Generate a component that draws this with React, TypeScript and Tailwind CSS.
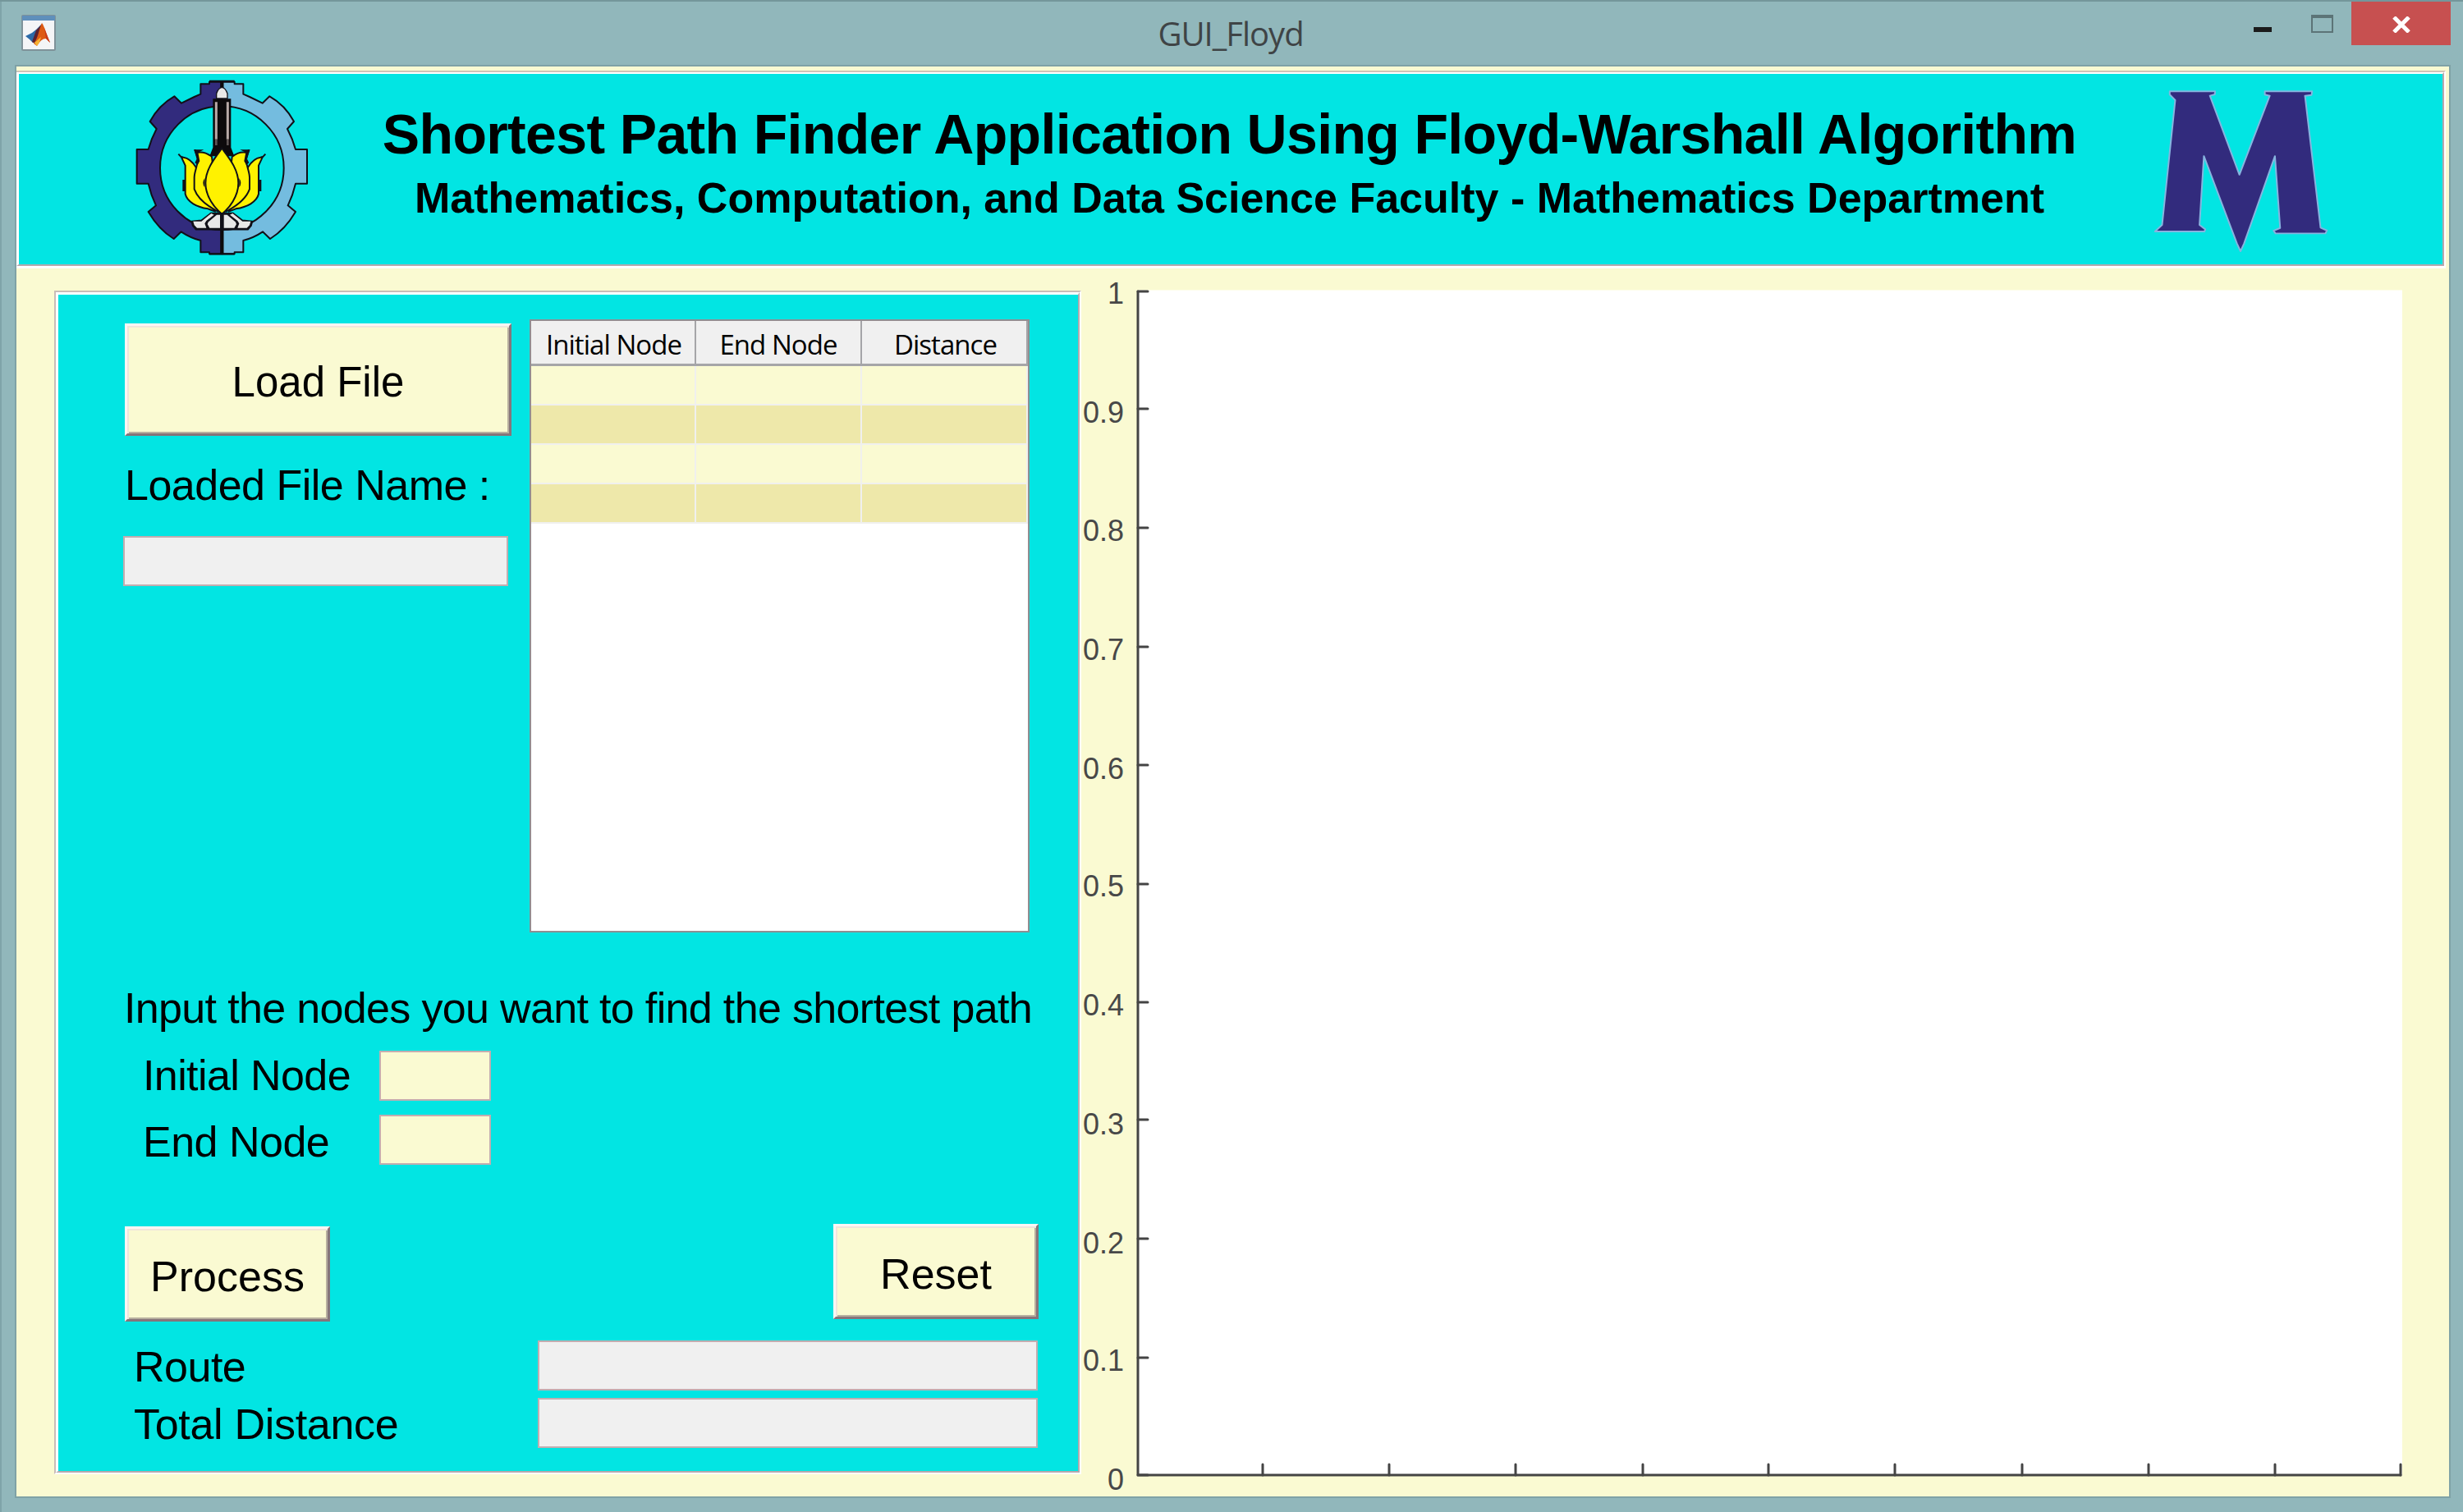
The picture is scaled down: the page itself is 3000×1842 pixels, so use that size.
import type { ReactNode } from "react";

const ARIAL = "font-['Liberation_Sans',Arial,sans-serif]";

const yTicks = [
  { label: "1", tick: 355, base: 370 },
  { label: "0.9", tick: 498, base: 515 },
  { label: "0.8", tick: 643, base: 659 },
  { label: "0.7", tick: 788, base: 804 },
  { label: "0.6", tick: 932, base: 949 },
  { label: "0.5", tick: 1077, base: 1092 },
  { label: "0.4", tick: 1221, base: 1237 },
  { label: "0.3", tick: 1364, base: 1382 },
  { label: "0.2", tick: 1509, base: 1527 },
  { label: "0.1", tick: 1654, base: 1670 },
  { label: "0", tick: 1797, base: 1815 },
];

const xTicks = [1538, 1692, 1846, 2001, 2154, 2308, 2463, 2617, 2771, 2924];

const halfGear =
  "M391 60H345V68H313V105L290 115L243 138L217 113Q160 145 128 205L152 232Q132 270 122 307H80V432H122Q132 475 150 512L122 535Q160 600 215 634L242 608Q275 630 313 640V683H345V689H391Z";

function GearLogo() {
  return (
    <svg className="h-[232px] w-[220px] shrink-0" viewBox="60 31 660 696">
      <g stroke="#111018" strokeWidth="6" strokeLinejoin="round">
        <path d={halfGear} fill="#322b7d" />
        <path d={halfGear} fill="#74bcdf" transform="translate(782 0) scale(-1 1)" />
        <circle cx="391" cy="375" r="226" fill="#02e5e3" />
      </g>
      <path d="M345 58H437M345 689H437" stroke="#111018" strokeWidth="7" />
      <path d="M391 60V90M391 540V689" stroke="#0d0a0c" strokeWidth="13" />
      {[false, true].map((mirror) => (
        <g
          key={String(mirror)}
          transform={mirror ? "translate(782 0) scale(-1 1)" : undefined}
          stroke="#111018"
          strokeLinejoin="round"
        >
          <path d="M391 540H350L316 566L280 570L284 586L296 600H391Z" fill="#111018" strokeWidth="5" />
          <path d="M352 541L316 570H286L290 584L300 594H334L328 578L334 568L362 546Z" fill="#e8e8e8" stroke="none" />
          <path d="M384 546H372L342 572L338 580L346 594H384Z" fill="#e8e8e8" stroke="none" />
          <path
            d="M232 324L243 336L257 366V470C264 500 300 518 340 524L366 534L310 440L296 372C282 350 266 338 250 336L243 334"
            fill="#fff200"
            strokeWidth="6"
          />
          <path d="M252 418V460" fill="none" strokeWidth="10" />
          <path
            d="M293 310L303 346C300 372 290 390 290 410V452C300 480 330 510 376 534L354 334Q330 314 304 318Z"
            fill="#fff200"
            strokeWidth="6"
          />
          <path d="M288 308H325L304 318L310 350L302 364L292 356L300 340Z" fill="#111018" stroke="none" />
        </g>
      ))}
      <path d="M358 122H424V300L436 332H346L358 300Z" fill="#0d0a0c" />
      <path d="M370 134V270M412 134V270" stroke="#b9aaa8" strokeWidth="9" />
      <path d="M370 270V292M412 270V292" stroke="#5d5454" strokeWidth="8" />
      <path d="M371 121V103Q378 82 391 80Q404 82 411 103V121Z" fill="#e9e9e9" stroke="#111018" strokeWidth="4" />
      <path
        d="M391 303C368 335 331 378 331 430C331 480 365 522 391 543C417 522 451 480 451 430C451 378 414 335 391 303Z"
        fill="#fff200"
        stroke="#111018"
        strokeWidth="6"
      />
      <path d="M328 412Q316 430 328 446ZM454 412Q466 430 454 446Z" fill="#111018" />
    </svg>
  );
}

function MLogo() {
  return (
    <svg className="mt-[17px] h-[203px] w-[220px] shrink-0" viewBox="360 320 660 610">
      <path
        d="M428 333H594L593 344L575 349L683 638L794 349L776 345V333H949L947 346L923 349L980 832L1003 842L998 853H815L808 843L832 833L813 570L700 890L687 918L674 890L553 570L537 822L558 838L555 846H374L400 822L448 365L428 345Z"
        fill="#322b7d"
        stroke="#86b4df"
        strokeWidth="6"
        strokeLinejoin="round"
      />
    </svg>
  );
}

function MatlabIcon() {
  return (
    <svg className="h-[44px] w-[42px]" viewBox="0 0 42 44">
      <rect x="1" y="1" width="40" height="42" rx="1" fill="#f4f5f7" stroke="#7f9299" strokeWidth="2" />
      <rect x="1" y="1" width="40" height="6" fill="#5f8fbb" />
      <path d="M5 26L13 22L18 18L24 12L19 28L14 34L10 30Z" fill="#2c6aa8" />
      <path d="M18 19Q22 15 25 11L24 26L18 36L13 33Z" fill="#5c2130" />
      <path d="M25 10C28 13 31 26 35 34L30 29Q24 29 19 38L15 35C20 30 22 16 25 10Z" fill="#dd5a14" />
      <path d="M16 34L24 27L22 34L19 38Z" fill="#f6b233" />
      <path d="M28 16L35 34L30 29Z" fill="#c8391a" />
    </svg>
  );
}

function PushButton({ className, children }: { className: string; children: ReactNode }) {
  return (
    <button
      className={`${className} flex items-center justify-center border-[3px] border-t-[#fdf6f4] border-r-[#86757a] border-b-[#86757a] border-l-[#fdf6f4] bg-[#fafad2] whitespace-nowrap shadow-[inset_2px_2px_0_#efe6dc,inset_-2px_-2px_0_#b8b09f]`}
    >
      {children}
    </button>
  );
}

function Field({ className }: { className: string }) {
  return <div className={`${className} border-2 border-[#c3adb0]`} />;
}

function DataTable() {
  const rows = [
    "h-[48px] bg-[#fafad2]",
    "h-[48px] bg-[#eee8aa]",
    "h-[48px] bg-[#fafad2]",
    "h-[48px] bg-[#eee8aa]",
  ];
  return (
    <div className="h-[747px] w-[609px] border-2 border-[#8f8f92] bg-white">
      <div className="grid h-[55px] grid-cols-[201px_202px_202px] border-b-3 border-[#a5a5a8] bg-[#f0f0f0] text-center font-['Open_Sans',sans-serif] text-[33px] leading-[58px] text-black">
        <div className="border-r-2 border-[#a5a5a8] pl-[2px] tracking-[-0.95px] whitespace-nowrap">Initial Node</div>
        <div className="border-r-2 border-[#a5a5a8] tracking-[-0.95px] whitespace-nowrap">End Node</div>
        <div className="border-r-2 border-[#a5a5a8] pl-[3px] tracking-[-0.95px] whitespace-nowrap">Distance</div>
      </div>
      {rows.map((row, i) => (
        <div key={i} className={`${row} grid grid-cols-[201px_202px_202px]`}>
          <div className="border-r-2 border-b-2 border-[#f0f0ee]" />
          <div className="border-r-2 border-b-2 border-[#f0f0ee]" />
          <div className="border-r-2 border-b-2 border-[#f0f0ee]" />
        </div>
      ))}
    </div>
  );
}

function Axes() {
  return (
    <svg className={`h-[1493px] w-[1612px] shrink-0 ${ARIAL}`} viewBox="1317 330 1612 1493">
      <rect x="1386" y="353.5" width="1540" height="1444" fill="#ffffff" />
      <g stroke="#444444" strokeWidth="3" strokeLinejoin="round" strokeLinecap="round" fill="none">
        <path d="M1386 355V1797H2924" />
        {yTicks.map((t) => (
          <path key={t.label} d={`M1386 ${t.tick}H1398`} />
        ))}
        {xTicks.map((x) => (
          <path key={x} d={`M${x} 1797V1784`} />
        ))}
      </g>
      <g fill="#484848" fontSize="36" textAnchor="end">
        {yTicks.map((t) => (
          <text key={t.label} x="1369" y={t.base}>
            {t.label}
          </text>
        ))}
      </g>
    </svg>
  );
}

function TitleBar() {
  return (
    <div className="grid h-[81px] shrink-0 grid-cols-3 border-t-2 border-[#74979b]">
      <div className="pt-[16px] pl-[26px]">
        <MatlabIcon />
      </div>
      <div className="pr-[2px] text-center font-['Open_Sans',sans-serif] text-[40px] leading-[78px] tracking-[-1px] text-[#3f4446]">
        GUI_Floyd
      </div>
      <div className="flex justify-end pr-[15px]">
        <div className="mt-[31px] mr-[48px] h-[6px] w-[22px] bg-[#1b1b1b]" />
        <div className="mt-[16px] mr-[22px] h-[22px] w-[27px] border-2 border-t-4 border-[#5c7477]" />
        <div className="flex h-[53px] w-[121px] items-center justify-center bg-[#c75050]">
          <svg className="mt-[3px] h-[20px] w-[24px]" viewBox="0 0 24 20">
            <path d="M3 1L21 19M21 1L3 19" stroke="#ffffff" strokeWidth="5" />
          </svg>
        </div>
      </div>
    </div>
  );
}

function Header() {
  return (
    <div className="mt-[5px] mr-[4px] h-[241px] shrink-0 border-t-2 border-r-2 border-b-3 border-t-[#cfc4b8] border-r-white border-b-white">
      <div className="flex h-full border-t-2 border-r-2 border-b-2 border-l-3 border-t-white border-r-[#b5a9ad] border-b-[#b5a9ad] border-l-white bg-[#02e5e3] pl-[137px]">
        <GearLogo />
        <div className={`flex w-[2240px] shrink-0 flex-col items-center pr-[5px] font-bold whitespace-nowrap text-black ${ARIAL}`}>
          <div className="pt-[33px] text-[68px] leading-[80px] tracking-[-0.65px]">
            Shortest Path Finder Application Using Floyd-Warshall Algorithm
          </div>
          <div className="text-[52px] leading-[76px]">
            Mathematics, Computation, and Data Science Faculty - Mathematics Department
          </div>
        </div>
        <MLogo />
      </div>
    </div>
  );
}

function ControlPanel() {
  return (
    <div className="mt-[27px] ml-[46px] h-[1442px] w-[1251px] shrink-0 border-2 border-t-[#c9bdb8] border-r-white border-b-white border-l-[#c9bdb8]">
      <div
        className={`flex h-full flex-col border-t-3 border-r-2 border-b-2 border-l-3 border-t-white border-r-[#b5a9ad] border-b-[#b5a9ad] border-l-white bg-[#02e5e3] text-[52px] leading-[60px] whitespace-nowrap text-black ${ARIAL}`}
      >
        <div className="flex h-[777px] shrink-0">
          <div className="w-[574px] shrink-0 pt-[35px] pl-[79px]">
            <PushButton className="ml-[2px] h-[137px] w-[471px] pt-[7px] text-[51px]">Load File</PushButton>
            <div className="mt-[30px] pl-[2px] tracking-[-0.5px]">Loaded File Name :</div>
            <Field className="mt-[32px] h-[61px] w-[469px] bg-[#f0f0f0]" />
          </div>
          <div className="pt-[30px]">
            <DataTable />
          </div>
        </div>
        <div className="mt-[62px] pl-[80px] tracking-[-0.66px]">Input the nodes you want to find the shortest path</div>
        <div className="mt-[19px] flex h-[64px] pl-[103px]">
          <div className="w-[288px] pt-[3px] tracking-[-0.6px]">Initial Node</div>
          <Field className="mt-[3px] h-[61px] w-[136px] bg-[#fafad2]" />
        </div>
        <div className="mt-[17px] flex h-[64px] pl-[103px]">
          <div className="w-[288px] pt-[3px] tracking-[-0.5px]">End Node</div>
          <Field className="h-[61px] w-[136px] bg-[#fafad2]" />
        </div>
        <div className="mt-[69px] flex justify-between pr-[48px] pl-[81px]">
          <PushButton className="mt-[3px] h-[116px] w-[250px] pt-[5px]">Process</PushButton>
          <PushButton className="h-[116px] w-[250px] pt-[5px]">Reset</PushButton>
        </div>
        <div className="mt-[23px] flex h-[61px] justify-between pr-[49px] pl-[92px]">
          <div className="pt-[2px] tracking-[-0.5px]">Route</div>
          <Field className="h-[61px] w-[609px] bg-[#f0f0f0]" />
        </div>
        <div className="mt-[9px] flex h-[61px] justify-between pr-[49px] pl-[92px]">
          <div className="pt-[2px] tracking-[-0.3px]">Total Distance</div>
          <Field className="h-[61px] w-[609px] bg-[#f0f0f0]" />
        </div>
      </div>
    </div>
  );
}

export default function App() {
  return (
    <div className="flex h-[1842px] w-[3000px] flex-col overflow-hidden bg-[#91b7bb] shadow-[inset_2px_0_0_#7fa4a9]">
      <TitleBar />
      <div className="mr-[17px] mb-[19px] ml-[20px] flex flex-1 flex-col bg-[#fafad2] shadow-[0_0_0_2px_#7fa2a6]">
        <Header />
        <div className="flex flex-1">
          <ControlPanel />
          <div className="pt-[3px]">
            <Axes />
          </div>
        </div>
      </div>
    </div>
  );
}
